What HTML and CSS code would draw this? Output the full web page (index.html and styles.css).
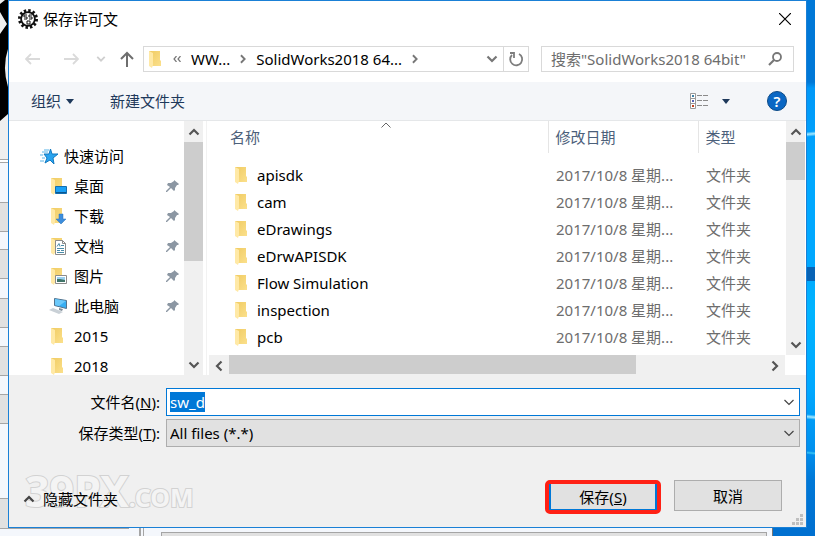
FILE: index.html
```html
<!DOCTYPE html>
<html lang="zh-CN">
<head>
    <meta charset="UTF-8">
    <meta name="viewport" content="width=device-width, initial-scale=1.0">
    <title>保存许可文</title>
    <link rel="stylesheet" href="styles.css">
</head>
<body>
    <!-- shared icons -->
    <svg class="sprite" aria-hidden="true">
        <defs>
            <linearGradient id="folder-fill" x1="0" y1="0" x2="1" y2="1">
                <stop offset="0" stop-color="#f0cb62"/>
                <stop offset="1" stop-color="#fbe08c"/>
            </linearGradient>
        </defs>
        <symbol id="folder" viewBox="0 0 18 18">
            <path d="M2 1h11v9l1 1v5H3z" fill="url(#folder-fill)"/>
            <path d="M2 1l4 2v12l-1 3-3-2z" fill="#ffe9a6"/>
        </symbol>
        <symbol id="pin" viewBox="0 0 14 14">
            <path d="M8 1l5 4-1 1-1 0-2 3 0 2-1 1-3-3-4 4-1 0 0-1 4-4-3-2 1-2 3 0 3-2z" fill="#8c97a3"/>
        </symbol>
        <symbol id="chevron-up" viewBox="0 0 12 12">
            <path d="M1.500 8.500L6 4l4.500 4.500" fill="none" stroke="currentColor" stroke-width="2.200"/>
        </symbol>
        <symbol id="chevron-down" viewBox="0 0 12 12">
            <path d="M1.500 3.500L6 8l4.500-4.500" fill="none" stroke="currentColor" stroke-width="2.200"/>
        </symbol>
        <symbol id="chevron-left" viewBox="0 0 12 12">
            <path d="M8.500 1.500L4 6l4.500 4.500" fill="none" stroke="currentColor" stroke-width="2.200"/>
        </symbol>
        <symbol id="chevron-right" viewBox="0 0 12 12">
            <path d="M3.500 1.500L8 6l-4.500 4.500" fill="none" stroke="currentColor" stroke-width="2.200"/>
        </symbol>
        <symbol id="chevron-thin" viewBox="0 0 12 12">
            <path d="M1.500 4L6 8.500 10.500 4" fill="none" stroke="currentColor" stroke-width="1.200"/>
        </symbol>
    </svg>

    <div class="desktop">
        <div class="desktop-left">
            <svg class="logo-edge" viewBox="0 0 8 121" aria-hidden="true">
                <path d="M8 0v114L0 121V34l7-10L0 12V4L5 0z" fill="#000"/>
                <path d="M8 49q-6 18 0 38z" fill="#efefef"/>
            </svg>
        </div>

        <div class="dialog" role="dialog" aria-labelledby="dialog-title">
            <div class="titlebar">
                <svg class="app-icon" viewBox="0 0 20 20" aria-hidden="true">
                    <circle cx="10" cy="10" r="8.500" fill="none" stroke="#111" stroke-width="3" stroke-dasharray="2.400 2.050"/>
                    <circle cx="10" cy="10" r="6.900" fill="#fff" stroke="#111" stroke-width="1.800"/>
                    <path d="M9 6H6v2h3v2H6M14 6h-3v2h3v2h-3M12 12H9v3h3v-3" fill="none" stroke="#111" stroke-width="1"/>
                </svg>
                <span id="dialog-title">保存许可文</span>
                <button class="close" type="button" aria-label="关闭">
                    <svg width="12" height="12" viewBox="0 0 12 12"><path d="M0 0l12 12M12 0L0 12" stroke="#000" stroke-width="1.200"/></svg>
                </button>
            </div>

            <div class="navbar">
                <div class="nav-buttons">
                    <button class="back" type="button" aria-label="后退">
                        <svg width="16" height="12" viewBox="0 0 16 12"><path d="M15 6H1M6 1L1 6l5 5" fill="none" stroke="#dadada" stroke-width="1.800"/></svg>
                    </button>
                    <button class="forward" type="button" aria-label="前进">
                        <svg width="16" height="12" viewBox="0 0 16 12"><path d="M1 6h14M10 1l5 5-5 5" fill="none" stroke="#dadada" stroke-width="1.800"/></svg>
                    </button>
                    <button class="recent" type="button" aria-label="最近位置">
                        <svg width="10" height="10"><use href="#chevron-down"/></svg>
                    </button>
                    <button class="up" type="button" aria-label="上移">
                        <svg width="14" height="16" viewBox="0 0 14 16"><path d="M7 16V2M1 8l6-6 6 6" fill="none" stroke="#6e6e6e" stroke-width="2"/></svg>
                    </button>
                </div>
                <div class="address">
                    <svg class="folder-icon" width="18" height="18" aria-hidden="true"><use href="#folder"/></svg>
                    <svg class="overflow" width="8" height="6" viewBox="0 0 8 6" aria-hidden="true"><path d="M3.500 0L1 3l2.500 3M7.500 0L5 3l2.500 3" fill="none" stroke="#777" stroke-width="1.200"/></svg>
                    <a class="crumb" href="#">WW...</a>
                    <svg class="crumb-arrow" width="10" height="10" aria-hidden="true"><use href="#chevron-right"/></svg>
                    <a class="crumb" href="#">SolidWorks2018 64...</a>
                    <svg class="crumb-arrow" width="10" height="10" aria-hidden="true"><use href="#chevron-right"/></svg>
                    <button class="history" type="button" aria-label="以前的位置">
                        <svg width="12" height="12"><use href="#chevron-down"/></svg>
                    </button>
                    <button class="refresh" type="button" aria-label="刷新">
                        <svg width="16" height="16" viewBox="0 0 16 16"><path d="M4 4a6 6 0 1 0 7-1M2 2h4v5" fill="none" stroke="#7d7d7d" stroke-width="1.800"/></svg>
                    </button>
                </div>
                <div class="search">
                    <input type="text" aria-label="搜索" placeholder='搜索"SolidWorks2018 64bit"'>
                    <svg width="14" height="14" viewBox="0 0 14 14" aria-hidden="true"><circle cx="9" cy="5" r="4" fill="none" stroke="#777" stroke-width="1.800"/><path d="M6 8l-5 5" stroke="#777" stroke-width="2.200"/></svg>
                </div>
            </div>

            <div class="toolbar">
                <button class="organize" type="button">组织
                    <svg width="8" height="5" viewBox="0 0 8 5" aria-hidden="true"><path d="M0 0h8L4 5z" fill="#1e395b"/></svg>
                </button>
                <button type="button">新建文件夹</button>
                <button class="view" type="button" aria-label="更改视图">
                    <svg width="18" height="16" viewBox="0 0 18 16">
                        <path d="M.5.5h5v15h-5zM.5 5.500h5M.5 10.500h5" fill="#fff" stroke="#999"/>
                        <path d="M2 2h2v2H2z" fill="#3d7fa6"/>
                        <path d="M2 7h2v2H2z" fill="#5763b5"/>
                        <path d="M2 12h2v2H2z" fill="#c0401c"/>
                        <path d="M7 2.500h5M13 2.500h5M7 7.500h5M13 7.500h5M7 12.500h5M13 12.500h5" stroke="#8a8a8a"/>
                    </svg>
                    <svg width="8" height="5" viewBox="0 0 8 5"><path d="M0 0h8L4 5z" fill="#1e395b"/></svg>
                </button>
                <button class="help" type="button" aria-label="帮助">?</button>
            </div>

            <div class="panes">
                <div class="sidebar">
                    <ul class="tree">
                        <li class="root">
                            <svg width="20" height="18" viewBox="0 0 20 18" aria-hidden="true">
                                <path d="M10.500 2l1.500 5h6l-5 4 1 6-4-4-5 3 2-5-3-4h5z" fill="#2aa4ef" stroke="#1279c0"/>
                                <path d="M4 3h5M2 5h6M0 8h3M2 11h3M0 14h4" stroke="#59b4e8"/>
                            </svg>
                            <a href="#">快速访问</a>
                        </li>
                        <li>
                            <svg width="18" height="18" viewBox="0 0 18 18" aria-hidden="true"><use href="#folder"/><path d="M6.500 9.500h11v7h-11z" fill="#1aa0f5" stroke="#146eaf"/><path d="M7 15.500h10" stroke="#0c5791"/></svg>
                            <a href="#">桌面</a>
                            <svg class="pin" width="14" height="14" aria-hidden="true"><use href="#pin"/></svg>
                        </li>
                        <li>
                            <svg width="18" height="18" viewBox="0 0 18 18" aria-hidden="true"><use href="#folder"/><path d="M10 7h4v5h3l-5 5-5-5h3z" fill="#3c8ddc" stroke="#2b72bd" stroke-width=".5"/></svg>
                            <a href="#">下载</a>
                            <svg class="pin" width="14" height="14" aria-hidden="true"><use href="#pin"/></svg>
                        </li>
                        <li>
                            <svg width="18" height="18" viewBox="0 0 18 18" aria-hidden="true"><use href="#folder"/><path d="M6.500 3.500h7l3 3v11h-10z" fill="#fff" stroke="#8b8b8b"/><path d="M13.500 3.500v3h3" fill="none" stroke="#8b8b8b"/><path d="M8 9.500l2-3 1 3M12 8.500h3M8 11.500h7M8 13.500h3M12 13.500h3M8 15.500h7" fill="none" stroke="#4a8ba8"/></svg>
                            <a href="#">文档</a>
                            <svg class="pin" width="14" height="14" aria-hidden="true"><use href="#pin"/></svg>
                        </li>
                        <li>
                            <svg width="18" height="18" viewBox="0 0 18 18" aria-hidden="true"><use href="#folder"/><path d="M6.500 8.500h11v8h-11z" fill="#fff" stroke="#8b8b8b"/><path d="M8 10h8v3H8z" fill="#9bd0f0"/><path d="M8 12l3 0 5 1v2H8z" fill="#3f7468"/></svg>
                            <a href="#">图片</a>
                            <svg class="pin" width="14" height="14" aria-hidden="true"><use href="#pin"/></svg>
                        </li>
                        <li>
                            <svg width="18" height="18" viewBox="0 0 18 18" aria-hidden="true"><path d="M5.500 1.500l12 2v8l-12-3z" fill="#38aef2" stroke="#53738d"/><path d="M6 2l11 2-7 5-4-1z" fill="#6cc9fa"/><path d="M10 11l4 1-1 2-3-1z" fill="#7f8d99"/><path d="M0 13l4-2 10 4-4 2z" fill="#c9d0d6"/></svg>
                            <a href="#">此电脑</a>
                            <svg class="pin" width="14" height="14" aria-hidden="true"><use href="#pin"/></svg>
                        </li>
                        <li>
                            <svg width="18" height="18" aria-hidden="true"><use href="#folder"/></svg>
                            <a href="#">2015</a>
                        </li>
                        <li>
                            <svg width="18" height="18" aria-hidden="true"><use href="#folder"/></svg>
                            <a href="#">2018</a>
                        </li>
                    </ul>
                    <div class="scroll-y">
                        <button type="button" aria-label="向上滚动"><svg width="12" height="12"><use href="#chevron-up"/></svg></button>
                        <div class="track"><div class="thumb thumb-tree"></div></div>
                        <button type="button" aria-label="向下滚动"><svg width="12" height="12"><use href="#chevron-down"/></svg></button>
                    </div>
                </div>

                <div class="files">
                    <div class="files-main">
                        <div class="files-view">
                            <table>
                                <thead>
                                    <tr>
                                        <th class="col-name">名称<svg class="sort" width="10" height="6" viewBox="0 0 10 6" aria-hidden="true"><path d="M.5 5.500L5 1l4.500 4.500" fill="none" stroke="#666"/></svg></th>
                                        <th class="col-date">修改日期</th>
                                        <th class="col-type">类型</th>
                                    </tr>
                                </thead>
                                <tbody>
                                    <tr><td><svg width="18" height="18"><use href="#folder"/></svg>apisdk</td><td>2017/10/8 星期...</td><td>文件夹</td></tr>
                                    <tr><td><svg width="18" height="18"><use href="#folder"/></svg>cam</td><td>2017/10/8 星期...</td><td>文件夹</td></tr>
                                    <tr><td><svg width="18" height="18"><use href="#folder"/></svg>eDrawings</td><td>2017/10/8 星期...</td><td>文件夹</td></tr>
                                    <tr><td><svg width="18" height="18"><use href="#folder"/></svg>eDrwAPISDK</td><td>2017/10/8 星期...</td><td>文件夹</td></tr>
                                    <tr><td><svg width="18" height="18"><use href="#folder"/></svg>Flow Simulation</td><td>2017/10/8 星期...</td><td>文件夹</td></tr>
                                    <tr><td><svg width="18" height="18"><use href="#folder"/></svg>inspection</td><td>2017/10/8 星期...</td><td>文件夹</td></tr>
                                    <tr><td><svg width="18" height="18"><use href="#folder"/></svg>pcb</td><td>2017/10/8 星期...</td><td>文件夹</td></tr>
                                </tbody>
                            </table>
                        </div>
                        <div class="scroll-y">
                            <button type="button" aria-label="向上滚动"><svg width="12" height="12"><use href="#chevron-up"/></svg></button>
                            <div class="track"><div class="thumb thumb-files"></div></div>
                            <button type="button" aria-label="向下滚动"><svg width="12" height="12"><use href="#chevron-down"/></svg></button>
                        </div>
                    </div>
                    <div class="scroll-x">
                        <button type="button" aria-label="向左滚动"><svg width="12" height="12"><use href="#chevron-left"/></svg></button>
                        <div class="track"><div class="thumb"></div></div>
                        <button type="button" aria-label="向右滚动"><svg width="12" height="12"><use href="#chevron-right"/></svg></button>
                    </div>
                </div>
            </div>

            <form class="save-form" id="save-form">
                <label for="file-name">文件名(<u>N</u>):</label>
                <div class="combo combo-name">
                    <input type="text" id="file-name" value="sw_d" autocomplete="off" spellcheck="false">
                    <svg width="12" height="12" aria-hidden="true"><use href="#chevron-thin"/></svg>
                </div>
                <label for="file-type">保存类型(<u>T</u>):</label>
                <div class="combo combo-type">
                    <select id="file-type">
                        <option>All files (*.*)</option>
                    </select>
                    <svg width="12" height="12" aria-hidden="true"><use href="#chevron-thin"/></svg>
                </div>
            </form>

            <div class="actions">
                <div class="watermark" aria-hidden="true">39PX<small>.COM</small></div>
                <button class="hide-folders" type="button">
                    <svg width="12" height="12" aria-hidden="true"><use href="#chevron-up"/></svg>隐藏文件夹
                </button>
                <span class="highlight"><button class="save" type="submit" form="save-form">保存(<u>S</u>)</button></span>
                <button class="cancel" type="button">取消</button>
                <svg class="grip" width="12" height="12" viewBox="0 0 12 12" aria-hidden="true">
                    <path d="M8 0h3v3H8zM4 4h3v3H4zM8 4h3v3H8zM0 8h3v3H0zM4 8h3v3H4zM8 8h3v3H8z" fill="#bfbfbf"/>
                </svg>
            </div>
        </div>

        <div class="desktop-right"></div>
        <div class="desktop-bottom">
            <div class="window-left"></div>
            <div class="window-right"><div class="window-field"></div></div>
            <div class="wallpaper"></div>
        </div>
    </div>

    <script>
        const fileName = document.getElementById('file-name');
        fileName.focus();
        fileName.select();

        document.getElementById('save-form').addEventListener('submit', (e) => {
            e.preventDefault();
        });
    </script>
</body>
</html>
```

FILE: styles.css
```css
* {
    box-sizing: border-box;
}
body {
    margin: 0;
    font-family: "Noto Sans", "Noto Sans CJK SC", sans-serif;
    font-size: 15px;
    line-height: 20px;
    color: #000;
}
button, input, select {
    font: inherit;
    color: inherit;
    margin: 0;
    padding: 0;
    border: none;
    background: none;
    outline: none;
}
button {
    display: flex;
    align-items: center;
    justify-content: center;
    white-space: nowrap;
}
a {
    color: inherit;
    text-decoration: none;
}
svg {
    flex: none;
    display: block;
}
.sprite {
    position: absolute;
    width: 0;
    height: 0;
}

/* what shows around the dialog */
.desktop {
    display: grid;
    grid-template-columns: 8px minmax(0, 1fr) 8px;
    grid-template-rows: minmax(0, 1fr) 8px;
    height: 100vh;
    overflow: hidden;
}
.desktop-left {
    background:
        linear-gradient(#a5a5a5 1px, #e1e1e1 1px 29px, #a5a5a5 29px 30px, transparent 30px) 0 202px / 8px 30px no-repeat,
        linear-gradient(#a5a5a5 1px, #e1e1e1 1px 29px, #a5a5a5 29px 30px, transparent 30px) 0 249px / 8px 30px no-repeat,
        linear-gradient(#a5a5a5 1px, #e1e1e1 1px 29px, #a5a5a5 29px 30px, transparent 30px) 0 298px / 8px 30px no-repeat,
        linear-gradient(#a5a5a5 1px, #e1e1e1 1px 29px, #a5a5a5 29px 30px, transparent 30px) 0 346px / 8px 31px no-repeat,
        linear-gradient(#a5a5a5 1px, #e1e1e1 1px 29px, #a5a5a5 29px 30px, transparent 30px) 0 394px / 8px 31px no-repeat,
        linear-gradient(#a5a5a5 1px, #e1e1e1 1px) 0 498px / 8px 30px no-repeat,
        linear-gradient(#efefef 159px, #a5a5a5 159px 160px, #fff 160px 162px, #a5a5a5 162px 163px, #f4f7fc 163px);
}
.logo-edge {
    width: 8px;
    height: 121px;
}
.desktop-right {
    background:
        linear-gradient(#0763b5, #0763b5) 0 267px / 8px 14px no-repeat,
        linear-gradient(175deg, transparent 30%, #a5e9ff 50%, transparent 70%) 0 128px / 8px 12px no-repeat,
        linear-gradient(5deg, transparent 30%, #a5e9ff 50%, transparent 70%) 0 411px / 8px 12px no-repeat,
        linear-gradient(185deg, transparent 30%, #36c4f5 50%, transparent 70%) 0 449px / 8px 8px no-repeat,
        linear-gradient(#0078d7 0, #0078d7 82px, #0098f8 88px, #00a8ff 180px, #00a8ff 266px, #00b4ff 310px, #00a8ff 390px, #0090ee 450px, #0078d7 480px, #0070d0 100%);
}
.desktop-bottom {
    grid-column: 1 / -1;
    display: flex;
    background: #f4f7fc;
}
.window-left {
    width: 141px;
    border-right: 2px solid #a5a5a5;
    background: linear-gradient(#a5a5a5, #a5a5a5) 0 0 / 129px 1px no-repeat;
}
.window-right {
    flex: 1;
    padding: 4px 5px 0 17px;
    margin-left: 2px;
    border-left: 1px solid #a5a5a5;
    border-right: 1px solid #777;
}
.window-field {
    height: 4px;
    border: 1px solid #a5a5a5;
    border-bottom: none;
    background: #e1e1e1;
}
.wallpaper {
    width: 42px;
    background: #0070d0;
}

.dialog {
    display: flex;
    flex-direction: column;
    border: 1px solid #1a80d6;
    background: #fff;
}

.titlebar {
    display: flex;
    align-items: center;
    height: 35px;
    padding: 0 14px 0 9px;
}
.app-icon {
    width: 20px;
    height: 20px;
    margin-right: 5px;
}
.close {
    margin-left: auto;
    width: 14px;
    height: 20px;
}

.navbar {
    display: flex;
    align-items: center;
    height: 46px;
    padding: 0 12px 0 16px;
}
.nav-buttons {
    display: flex;
    align-items: center;
    width: 118px;
}
.back {
    margin-right: 22px;
}
.forward {
    margin-right: 17px;
}
.recent {
    margin-right: 14px;
    color: #cfcfcf;
}
.address {
    display: flex;
    align-items: center;
    flex: 3 3 386px;
    min-width: 0;
    height: 26px;
    border: 1px solid #d9d9d9;
}
.folder-icon {
    margin: 0 8px 0 3px;
}
.overflow {
    margin-right: 10px;
}
.crumb-arrow {
    margin: 0 8px;
    color: #777;
}
.history {
    margin-left: auto;
    width: 23px;
    height: 24px;
    color: #777;
}
.refresh {
    width: 25px;
    height: 24px;
    border-left: 1px solid #d9d9d9;
}
.search {
    display: flex;
    align-items: center;
    flex: 2 2 253px;
    min-width: 0;
    height: 26px;
    margin-left: 12px;
    padding: 0 11px 0 9px;
    border: 1px solid #d9d9d9;
}
.search input {
    flex: 1;
    min-width: 0;
}
.search input::placeholder {
    color: #6d6d6d;
    opacity: 1;
}

.toolbar {
    display: flex;
    align-items: center;
    height: 39px;
    padding: 0 19px 0 22px;
    background: #f4f6f9;
    border-bottom: 1px solid #e5e7e9;
    color: #1e395b;
}
.organize {
    gap: 5px;
    margin-right: 36px;
}
.view {
    gap: 14px;
    margin-left: auto;
    margin-right: 37px;
}
.help {
    width: 20px;
    height: 20px;
    border: 1px solid #0c4a87;
    border-radius: 50%;
    background: #0a67c4;
    color: #fff;
    font-weight: 600;
}

.panes {
    display: flex;
    flex: 1;
    min-height: 0;
}
.sidebar {
    display: flex;
    width: 198px;
    padding-right: 3px;
    border-right: 1px solid #f2f2f2;
}
.tree {
    flex: 1;
    margin: 0;
    padding: 20px 4px 0 40px;
    list-style: none;
    overflow: hidden;
}
.tree li {
    display: flex;
    align-items: center;
    gap: 7px;
    height: 30px;
}
.tree .root {
    gap: 4px;
    margin-left: -9px;
}
.pin {
    margin-left: auto;
}

.scroll-y, .scroll-x {
    display: flex;
    background: #f0f0f0;
    color: #555;
}
.scroll-y {
    flex-direction: column;
    width: 19px;
}
.scroll-x {
    height: 20px;
    margin: 0 21px 0 2px;
}
.scroll-y button, .scroll-x button {
    width: 20px;
    height: 21px;
}
.track {
    flex: 1;
}
.thumb {
    background: #cdcdcd;
}
.thumb-tree {
    height: 56%;
}
.thumb-files {
    height: 20%;
}
.scroll-x .thumb {
    width: 76%;
    height: 19px;
}

.files {
    display: flex;
    flex-direction: column;
    flex: 1;
    min-width: 0;
}
.files-main {
    display: flex;
    flex: 1;
    min-height: 0;
    padding-right: 1px;
}
.files-view {
    flex: 1;
    overflow: hidden;
}
table {
    width: 100%;
    table-layout: fixed;
    border-collapse: collapse;
    color: #6d6d6d;
}
th {
    position: relative;
    height: 32px;
    padding: 0 0 0 7px;
    font-weight: normal;
    text-align: left;
    color: #4c607a;
}
.col-name {
    padding-left: 23px;
}
.col-date {
    width: 150px;
}
.col-type {
    width: 88px;
}
.col-date, .col-type {
    border-left: 1px solid #e5e5e5;
}
.sort {
    position: absolute;
    top: 1px;
    left: 51%;
}
tbody::before {
    content: "";
    display: block;
    height: 8px;
}
td {
    height: 27px;
    padding: 0 0 0 8px;
    white-space: nowrap;
}
td:first-child {
    padding-left: 26px;
    color: #000;
}
td svg {
    display: inline-block;
    margin-right: 6px;
    vertical-align: -3px;
}

.save-form {
    display: grid;
    grid-template-columns: 151px minmax(0, 1fr);
    align-items: center;
    gap: 3px 6px;
    padding: 13px 6px 0 0;
    background: #f0f0f0;
}
.save-form label {
    text-align: right;
}
.combo {
    display: flex;
    align-items: center;
    height: 28px;
    padding: 0 4px 0 3px;
    border: 1px solid #adadad;
    background: #e1e1e1;
    color: #444;
}
.combo-name {
    border-color: #0078d7;
    background: #fff;
}
.combo input, .combo select {
    flex: 1;
    min-width: 0;
    height: 20px;
    line-height: 20px;
    color: #000;
    appearance: none;
}
.combo input::selection {
    background: #0078d7;
    color: #fff;
}

.actions {
    position: relative;
    display: flex;
    align-items: flex-start;
    gap: 13px;
    height: 80px;
    padding: 33px 24px 0 14px;
    background: #f0f0f0;
}
.hide-folders {
    position: relative;
    gap: 8px;
    margin: 9px auto 0 0;
}
.hide-folders svg {
    color: #444;
}
.highlight {
    border: 4px solid #ff2115;
    border-radius: 5px;
    background: #ff2115;
}
.save, .cancel {
    width: 108px;
    background: #e1e1e1;
}
.save {
    height: 26px;
    border: solid #0078d7;
    border-width: 0 2px 1px;
}
.cancel {
    height: 31px;
    border: 1px solid #adadad;
}
.watermark {
    position: absolute;
    left: 16px;
    bottom: 14px;
    font-size: 43px;
    line-height: 32px;
    font-weight: bold;
    color: #f4f4f4;
    -webkit-text-stroke: 2px #d2d2d2;
    paint-order: stroke fill;
}
.watermark small {
    font-size: 25px;
}
.grip {
    position: absolute;
    right: 2px;
    bottom: 1px;
}
```
